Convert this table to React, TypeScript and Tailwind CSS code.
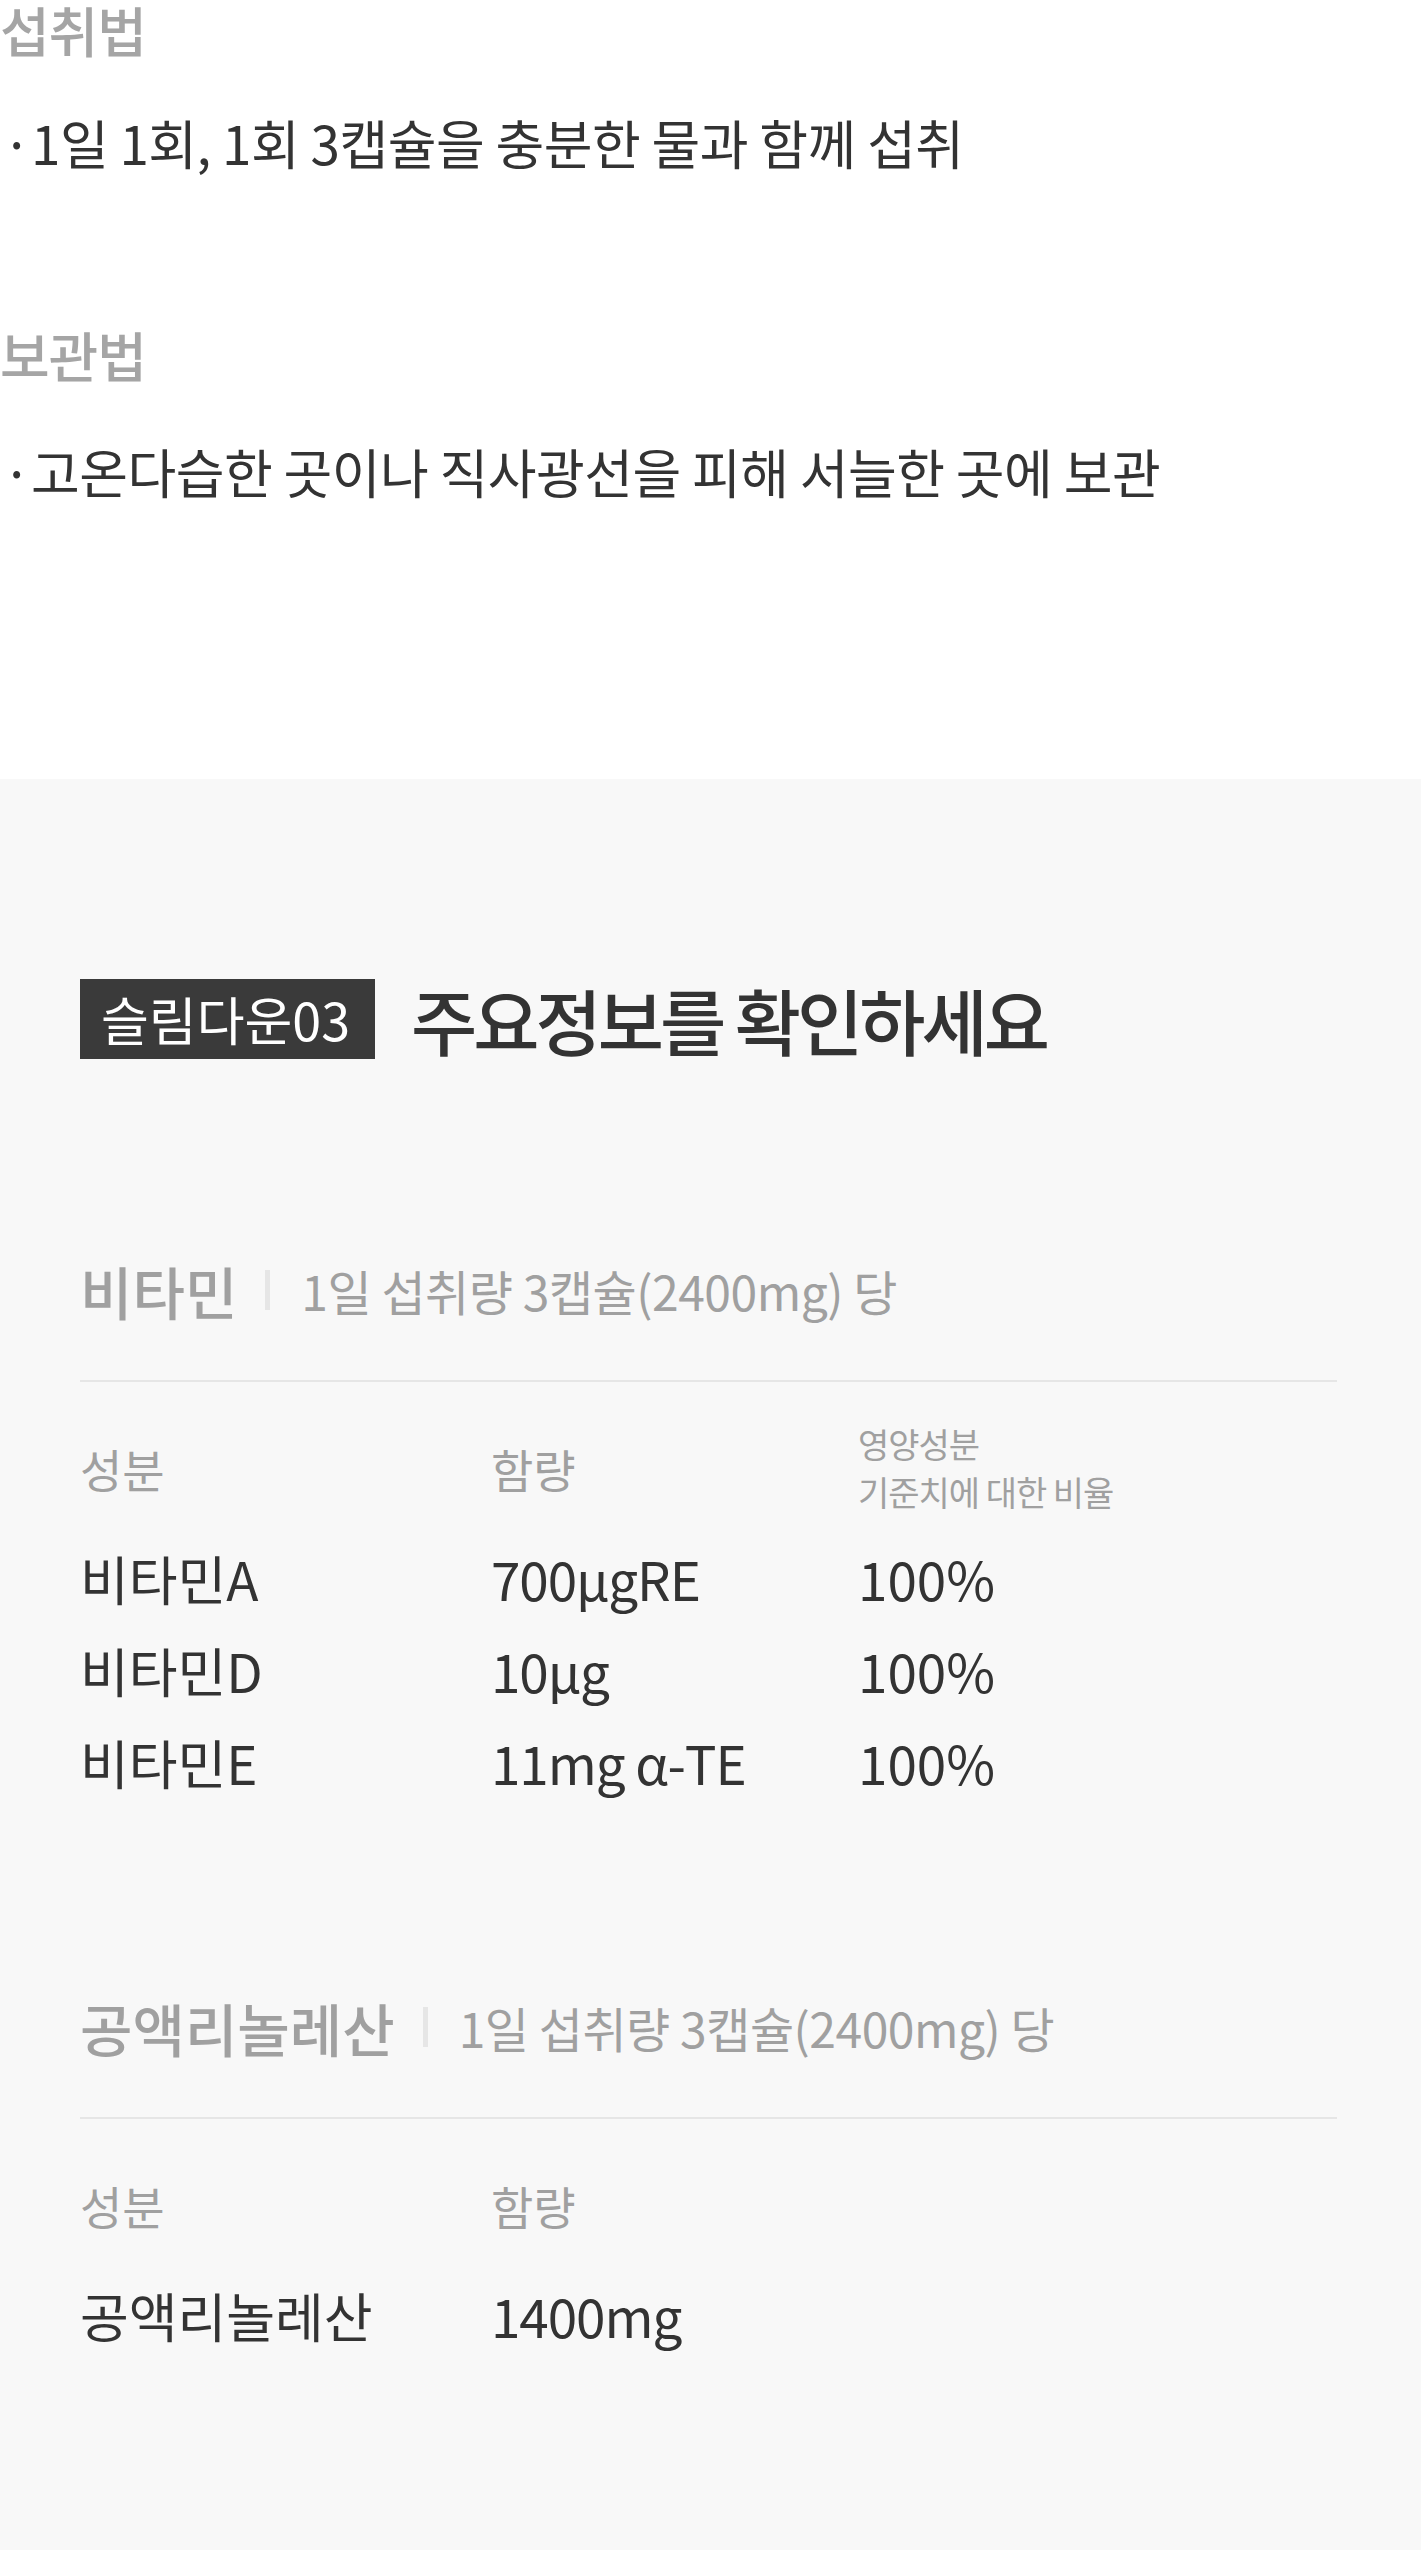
const font = { fontFamily: '"Noto Sans CJK KR", "Noto Sans", sans-serif' };

type Row = { name: string; amount: string; ratio?: string };

const vitamins: Row[] = [
  { name: '비타민A', amount: '700μgRE', ratio: '100%' },
  { name: '비타민D', amount: '10μg', ratio: '100%' },
  { name: '비타민E', amount: '11mg α-TE', ratio: '100%' },
];

const cla: Row[] = [{ name: '공액리놀레산', amount: '1400mg' }];

function Usage({ title, text, first }: { title: string; text: string; first?: boolean }) {
  return (
    <div className={first ? '' : 'mt-[153px]'}>
      <h3 className="text-[54px] leading-[60px] font-medium text-[#a5a5a5] tracking-[-0.02em]">{title}</h3>
      <p className={`${first ? 'mt-[52px]' : 'mt-[56px]'} text-[53px] leading-[60px] text-[#333] tracking-[-0.01em]`}>
        <span className="inline-block w-[31px] pl-[2px]">·</span>
        {text}
      </p>
    </div>
  );
}

function NutritionTable({ title, rows, showRatio }: { title: string; rows: Row[]; showRatio?: boolean }) {
  return (
    <div>
      <div className="flex items-center h-[60px]">
        <span className="text-[57px] leading-[60px] font-medium text-[#a0a0a0]">{title}</span>
        <span className="ml-[28px] w-[5px] h-[40px] bg-[#e6e6e6]" />
        <span className="ml-[31px] text-[48px] leading-[60px] text-[#a0a0a0] tracking-[-0.01em]">
          1일 섭취량 3캡슐(2400mg) 당
        </span>
      </div>
      <div className="mt-[60px] h-[2px] bg-[#e6e6e6]" />
      <div className="grid grid-cols-[411px_367px_1fr] items-center h-[96px] mt-[38px]">
        <span className="text-[46px] leading-[48px] text-[#a0a0a0]">성분</span>
        <span className="text-[46px] leading-[48px] text-[#a0a0a0]">함량</span>
        {showRatio && (
          <span className="text-[34px] leading-[48px] text-[#a0a0a0] tracking-[-0.03em]">
            영양성분
            <br />
            기준치에 대한 비율
          </span>
        )}
      </div>
      <div className="mt-[16px]">
        {rows.map((r) => (
          <div key={r.name} className="grid grid-cols-[411px_367px_1fr] text-[53px] leading-[92px] text-[#333]">
            <span>{r.name}</span>
            <span className="tracking-[-0.02em]">{r.amount}</span>
            <span>{r.ratio}</span>
          </div>
        ))}
      </div>
    </div>
  );
}

export default function App() {
  return (
    <div className="min-h-[2550px] w-[1421px] flex flex-col bg-white" style={font}>
      {/* intake / storage */}
      <section className="h-[779px]">
        <Usage first title="섭취법" text="1일 1회, 1회 3캡슐을 충분한 물과 함께 섭취" />
        <Usage title="보관법" text="고온다습한 곳이나 직사광선을 피해 서늘한 곳에 보관" />
      </section>

      {/* key info */}
      <section className="flex-1 bg-[#f8f8f8] pt-[200px] pl-[80px] pr-[84px] pb-[160px]">
        <div className="flex items-center">
          <span className="flex items-center h-[80px] w-[295px] bg-[#3a3a3a] pl-[21px] text-white text-[52px]">
            슬림다운03
          </span>
          <h2 className="ml-[36px] text-[72px] leading-[80px] font-medium text-[#333] tracking-[-0.055em]">
            주요정보를 확인하세요
          </h2>
        </div>

        <div className="mt-[201px]">
          <NutritionTable title="비타민" rows={vitamins} showRatio />
        </div>
        <div className="mt-[189px]">
          <NutritionTable title="공액리놀레산" rows={cla} />
        </div>
      </section>
    </div>
  );
}
